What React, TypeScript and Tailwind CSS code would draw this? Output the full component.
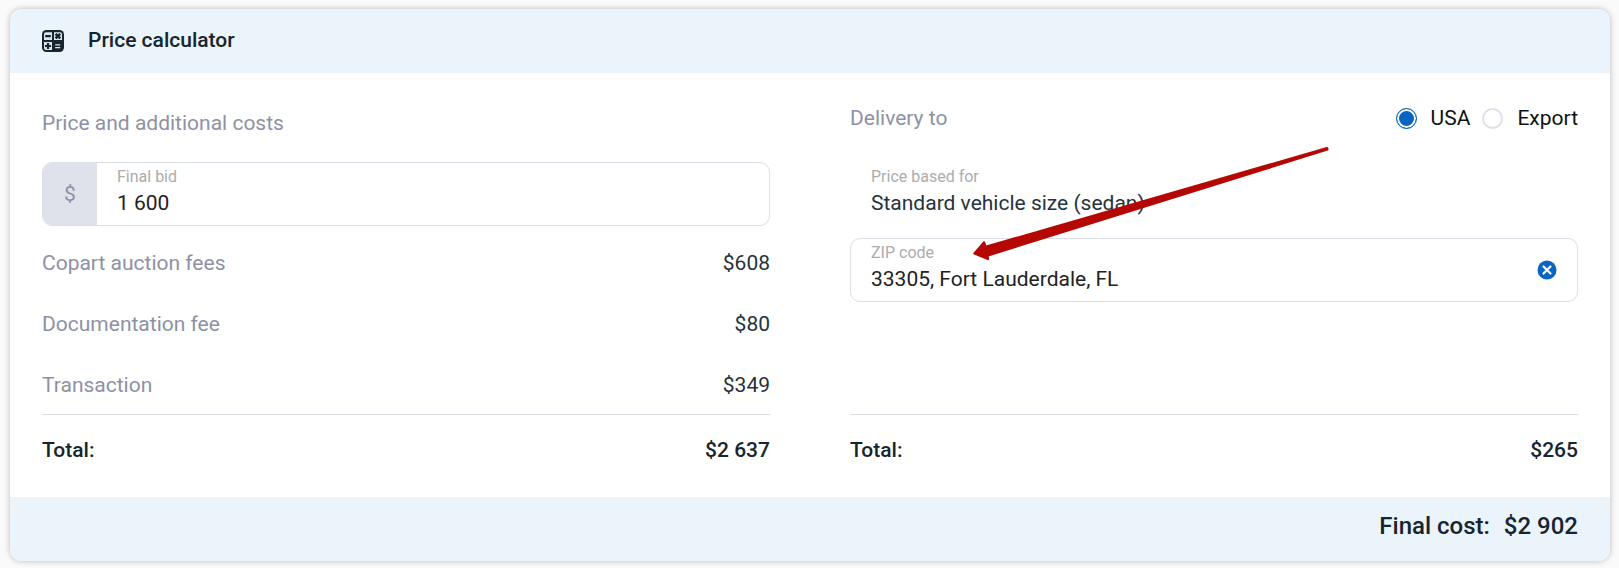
import React, { useState } from 'react';

const fees = [
  { name: 'Copart auction fees', value: '$608' },
  { name: 'Documentation fee', value: '$80' },
  { name: 'Transaction', value: '$349' },
];

const destinations = [
  { id: 'usa', label: 'USA' },
  { id: 'export', label: 'Export' },
];

const CalculatorIcon = () => (
  <svg className="h-[22px] w-[22px]" viewBox="0 0 22 22" aria-hidden="true">
    <rect width="22" height="22" rx="4.5" fill="#172530" />
    <path d="M4 2.2h6v7.8H2V4.2a2 2 0 0 1 2-2ZM12 2.2h6a2 2 0 0 1 2 2v5.8h-8ZM2 12h8v8H4a2 2 0 0 1-2-2Z" fill="#dce4ec" />
    <g stroke="#172530" strokeWidth="2.2" fill="none">
      <path d="M3.2 6.2h5.6M6 13v6M3 16h6" />
      <path d="m13.6 3.8 4.6 4.6M18.2 3.8l-4.6 4.6" strokeWidth="2.6" />
    </g>
    <path d="M13.2 14.8h5M13.2 17.6h5" stroke="#dce4ec" strokeWidth="1.2" />
  </svg>
);

const ClearIcon = () => (
  <svg className="h-5 w-5" viewBox="0 0 20 20" aria-hidden="true">
    <circle cx="10" cy="10" r="9.5" fill="#0a64c2" />
    <path d="m6.5 6.5 7 7M13.5 6.5l-7 7" stroke="#fff" strokeWidth="2.2" strokeLinecap="round" />
  </svg>
);

// Hand-drawn pointer to the ZIP code field
const Arrow = () => (
  <svg
    className="pointer-events-none absolute left-[120px] top-[40px] h-[120px] w-[364px]"
    viewBox="0 0 364 120"
    aria-hidden="true"
  >
    <path
      d="M4.5 107.5 14 96.5 15.5 101 357 2.2 357.4 3.4 17.5 109.5 18 113Z"
      fill="#b50805"
      stroke="#b50805"
      strokeWidth="2.4"
      strokeLinejoin="round"
    />
  </svg>
);

const TotalRow = ({ value }: { value: string }) => (
  <div className="flex h-[71px] items-center justify-between border-t border-[#dddee5] font-medium text-[#172530]">
    <span>Total:</span>
    <span>{value}</span>
  </div>
);

const App = () => {
  const [bid, setBid] = useState('1 600');
  const [zip, setZip] = useState('33305, Fort Lauderdale, FL');
  const [destination, setDestination] = useState('usa');

  return (
    <div className="min-h-screen bg-[#fafafa] pb-[7px] pl-[10px] pr-[9px] pt-[9px] font-['Roboto',sans-serif] text-[21px] leading-6 text-[#26323c]">
      <section className="overflow-hidden rounded-xl bg-white shadow-[0_0_6px_rgba(0,0,0,0.25)]">
        <header className="flex h-16 items-center gap-6 bg-[#ebf3fb] px-8 text-[#172530]">
          <CalculatorIcon />
          <h1 className="pb-0.5 font-medium">Price calculator</h1>
        </header>

        <div className="grid grid-cols-2 gap-20 px-8 pb-3 pt-[33px]">
          <div className="flex flex-col">
            <h2 className="mb-6 pt-0.5 leading-[30px] text-[#8e91a5]">Price and additional costs</h2>
            <div className="flex h-16 overflow-hidden rounded-[10px] border border-[#dddfe8]">
              <span className="flex w-[54px] items-center justify-center bg-[#dfe1eb] text-[#8e91a5]">$</span>
              <div className="flex flex-1 flex-col px-5 pt-1">
                <label htmlFor="bid" className="text-base leading-5 text-[#acacac]">Final bid</label>
                <input
                  id="bid"
                  className="mt-1 h-6 w-full bg-transparent text-[#222] outline-none"
                  value={bid}
                  onChange={(e) => setBid(e.target.value)}
                />
              </div>
            </div>
            <dl className="mt-[5px]">
              {fees.map((fee) => (
                <div key={fee.name} className="flex h-[61px] items-center justify-between pt-0.5">
                  <dt className="text-[#8e91a5]">{fee.name}</dt>
                  <dd>{fee.value}</dd>
                </div>
              ))}
            </dl>
            <TotalRow value="$2 637" />
          </div>

          <div className="relative flex flex-col">
            <div className="mb-8 flex items-center justify-between">
              <h2 className="text-[#8e91a5]">Delivery to</h2>
              <div className="flex items-center gap-3" role="radiogroup" aria-label="Delivery to">
                {destinations.map((d) => (
                  <label key={d.id} className="flex items-center gap-3.5 text-[#111]">
                    <input
                      type="radio"
                      name="destination"
                      className="h-[21px] w-[21px] appearance-none rounded-full border-2 border-[#dfe1eb] checked:border checked:border-[#0a64c2] checked:bg-[#0a64c2] checked:shadow-[inset_0_0_0_2px_white]"
                      checked={destination === d.id}
                      onChange={() => setDestination(d.id)}
                    />
                    {d.label}
                  </label>
                ))}
              </div>
            </div>
            <div className="mb-3 flex h-16 flex-col px-[21px] pt-[5px]">
              <span className="text-base leading-5 text-[#acacac]">Price based for</span>
              <span className="mt-1">Standard vehicle size (sedan)</span>
            </div>
            <div className="flex h-16 items-center rounded-[10px] border border-[#dddfe8] px-5">
              <div className="flex h-full flex-1 flex-col pt-1">
                <label htmlFor="zip" className="text-base leading-5 text-[#acacac]">ZIP code</label>
                <input
                  id="zip"
                  className="mt-1 h-6 w-full bg-transparent text-[#222] outline-none"
                  value={zip}
                  onChange={(e) => setZip(e.target.value)}
                />
              </div>
              <button type="button" aria-label="Clear ZIP code" onClick={() => setZip('')}>
                <ClearIcon />
              </button>
            </div>
            <div className="mt-auto">
              <TotalRow value="$265" />
            </div>
            <Arrow />
          </div>
        </div>

        <footer className="flex h-16 items-center justify-end gap-3.5 bg-[#ebf3fb] px-8 pb-1.5 text-2xl font-medium text-[#172530]">
          <span>Final cost:</span>
          <span>$2 902</span>
        </footer>
      </section>
    </div>
  );
};

export default App;
